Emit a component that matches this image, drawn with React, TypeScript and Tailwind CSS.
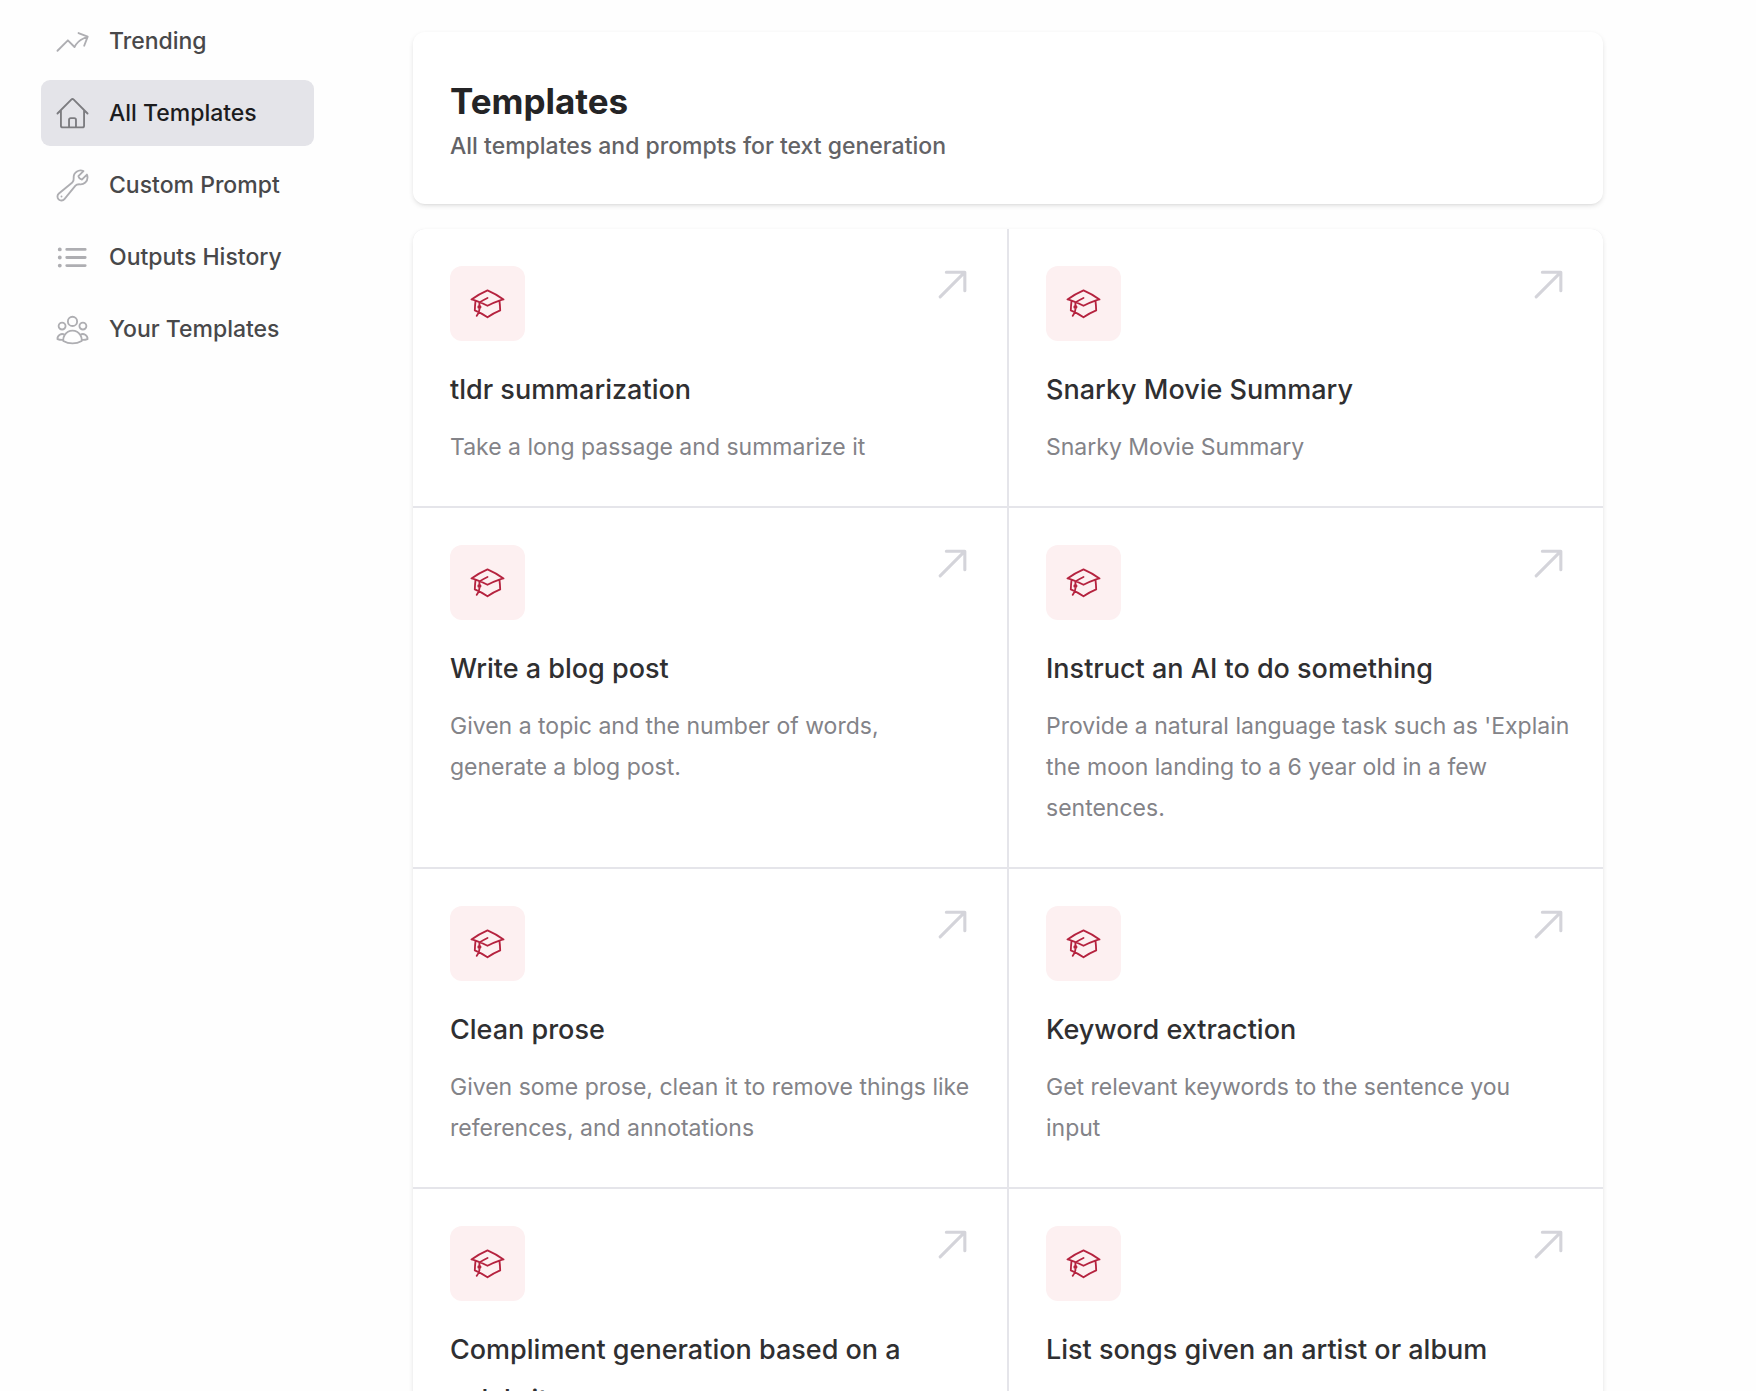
import React from "react";
import type { IconType } from "react-icons";
import {
  HiOutlineAcademicCap,
  HiOutlineArrowTrendingUp,
  HiOutlineHome,
  HiOutlineListBullet,
  HiOutlineUserGroup,
  HiOutlineWrench,
} from "react-icons/hi2";

interface NavItem {
  name: string;
  path: string;
  icon: IconType;
  stroke: string;
  current?: boolean;
}

interface Template {
  title: string;
  description?: string;
}

const thin = "[stroke-width:1.2]";
const thick = "[stroke-width:1.8]";

const navItems: NavItem[] = [
  { name: "Trending", path: "#trending", icon: HiOutlineArrowTrendingUp, stroke: thin },
  { name: "All Templates", path: "#all", icon: HiOutlineHome, stroke: thin, current: true },
  { name: "Custom Prompt", path: "#custom", icon: HiOutlineWrench, stroke: thin },
  { name: "Outputs History", path: "#history", icon: HiOutlineListBullet, stroke: thick },
  { name: "Your Templates", path: "#yours", icon: HiOutlineUserGroup, stroke: thin },
];

const templates: Template[] = [
  {
    title: "tldr summarization",
    description: "Take a long passage and summarize it",
  },
  { title: "Snarky Movie Summary", description: "Snarky Movie Summary" },
  {
    title: "Write a blog post",
    description:
      "Given a topic and the number of words, generate a blog post.",
  },
  {
    title: "Instruct an AI to do something",
    description:
      "Provide a natural language task such as 'Explain the moon landing to a 6 year old in a few sentences.",
  },
  {
    title: "Clean prose",
    description:
      "Given some prose, clean it to remove things like references, and annotations",
  },
  {
    title: "Keyword extraction",
    description: "Get relevant keywords to the sentence you\ninput",
  },
  { title: "Compliment generation based on a celebrity" },
  { title: "List songs given an artist or album" },
];

const Sidebar: React.FC = () => (
  <nav aria-label="Sidebar" className="flex w-[273px] shrink-0 flex-col gap-1.5 pt-2">
    {navItems.map(({ name, path, icon: Icon, stroke, current }) => (
      <a
        key={name}
        href={path}
        aria-current={current ? "page" : undefined}
        className={`flex h-[66px] items-center gap-4.5 rounded-[9px] px-[13px] text-[23px] font-medium ${
          current ? "bg-[#e4e4e9] text-[#1c1c1e]" : "text-[#48484a]"
        }`}
      >
        <Icon
          aria-hidden="true"
          className={`size-[37px] shrink-0 ${stroke} ${
            current ? "text-[#7c7c80]" : "text-[#aeaeb2]"
          }`}
        />
        {name}
      </a>
    ))}
  </nav>
);

const TemplateCard: React.FC<Template> = ({ title, description }) => (
  <li className="relative bg-white pt-[37px] pr-[31px] pb-[38px] pl-[37px]">
    <span className="flex size-[75px] items-center justify-center rounded-xl bg-[#fdf0f1] text-[#b5233f]">
      <HiOutlineAcademicCap aria-hidden="true" className="size-[37px] [stroke-width:1.2]" />
    </span>
    <h2 className="mt-6 text-[27px] leading-[50px] font-medium text-[#2f2f31]">
      <a href="#template">{title}</a>
    </h2>
    {description && (
      <p className="mt-3 text-[23px] leading-[41px] whitespace-pre-line text-[#838388]">
        {description}
      </p>
    )}
    {/* Corner arrow */}
    <svg
      aria-hidden="true"
      viewBox="0 0 24 24"
      fill="currentColor"
      className="absolute top-[37px] right-9 size-[37px] text-[#d4d4da]"
    >
      <path d="M20 4h1a1 1 0 00-1-1v1zm-1 12a1 1 0 102 0h-2zM8 3a1 1 0 000 2V3zM3.293 19.293a1 1 0 101.414 1.414l-1.414-1.414zM19 4v12h2V4h-2zm1-1H8v2h12V3zm-.707.293l-16 16 1.414 1.414 16-16-1.414-1.414z" />
    </svg>
  </li>
);

const App: React.FC = () => {
  return (
    <div className="flex h-screen gap-[99px] overflow-hidden bg-[#fefefe] pr-[153px] pl-[41px] font-['Inter',sans-serif]">
      <Sidebar />

      <main className="min-w-0 flex-1 pt-8">
        <header className="rounded-xl bg-white px-[37px] pt-[45px] pb-[38px] shadow-[0_2px_5px_rgba(0,0,0,0.1),0_2px_3px_-2px_rgba(0,0,0,0.1)]">
          <h1 className="text-[35px] leading-[49px] font-bold text-[#242426]">Templates</h1>
          <p className="text-[23px] leading-10 font-medium text-[#636366]">
            All templates and prompts for text generation
          </p>
        </header>

        <ul className="mt-[25px] grid grid-cols-2 gap-0.5 overflow-hidden rounded-xl bg-[#e5e5ea] shadow-[0_2px_5px_rgba(0,0,0,0.1),0_2px_3px_-2px_rgba(0,0,0,0.1)]">
          {templates.map((template) => (
            <TemplateCard key={template.title} {...template} />
          ))}
        </ul>
      </main>
    </div>
  );
};

export default App;
